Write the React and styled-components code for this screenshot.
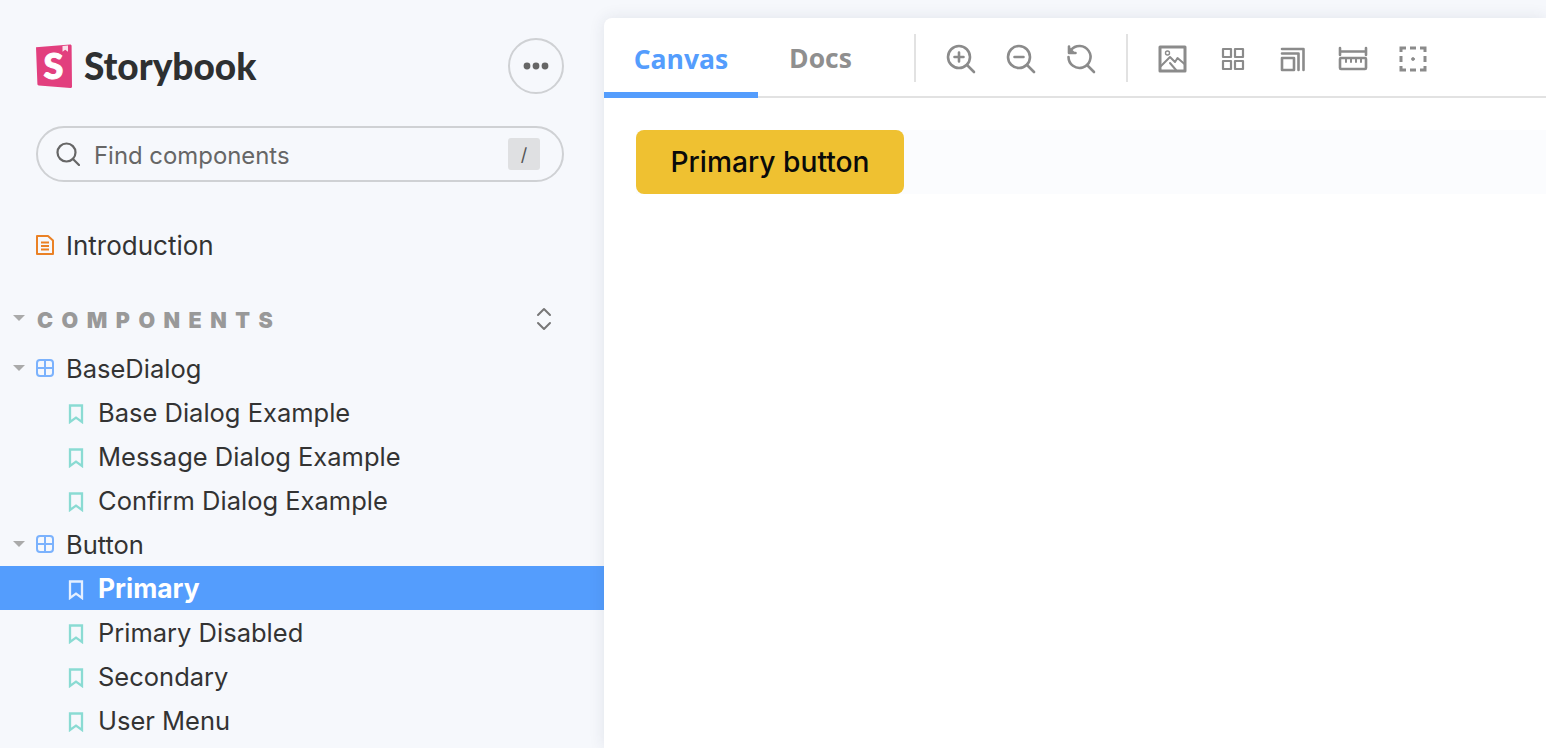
import React from "react";
import styled, { createGlobalStyle } from "styled-components";

const Global = createGlobalStyle`
  html, body { margin: 0; padding: 0; height: 100%; overflow: hidden; background: #f6f8fc; }
  #root { height: 100%; }
  * { box-sizing: border-box; }
`;

const Page = styled.div`
  display: flex;
  width: 1546px;
  height: 748px;
  overflow: hidden;
  background: #f6f8fc;
  font-family: Inter, "Liberation Sans", sans-serif;
  color: #333;
`;

const Sidebar = styled.aside`
  width: 604px;
  flex: none;
  padding-top: 38px;
  display: flex;
  flex-direction: column;
`;

const Brand = styled.div`
  display: flex;
  align-items: center;
  justify-content: space-between;
  padding: 0 40px 0 36px;
`;

const Logo = styled.div`
  display: flex;
  align-items: center;
  gap: 12px;
`;

const LogoName = styled.span`
  font-family: Lato, sans-serif;
  font-weight: 900;
  font-size: 37px;
  line-height: 44px;
  color: #2e3031;
`;

const MenuButton = styled.button`
  width: 56px;
  height: 56px;
  border-radius: 50%;
  border: 2px solid #cfd1d4;
  background: transparent;
  padding: 0;
  display: flex;
  align-items: center;
  justify-content: center;
`;

const Search = styled.div`
  margin: 32px 40px 0 36px;
  height: 56px;
  border-radius: 28px;
  border: 2px solid #cfd1d4;
  display: flex;
  align-items: center;
  padding: 0 22px 0 18px;
  gap: 14px;
`;

const SearchText = styled.span`
  flex: 1;
  font-size: 23.9px;
  color: #666;
  padding-top: 3px;
`;

const Kbd = styled.span`
  width: 32px;
  height: 32px;
  border-radius: 3px;
  background: #dfe0e2;
  color: #555;
  font-size: 18px;
  display: flex;
  align-items: center;
  justify-content: center;
`;

const Row = styled.div`
  height: 44px;
  display: flex;
  align-items: center;
  flex: none;
  font-size: ${(p) => (p.$active ? 26.4 : 25.5)}px;
  padding-left: ${(p) => (p.$depth === 1 ? 68 : 13)}px;
  background: ${(p) => (p.$active ? "#549dfd" : "transparent")};
  color: ${(p) => (p.$active ? "#fff" : "#333")};
  font-weight: ${(p) => (p.$active ? 700 : 400)};
`;

const IntroRow = styled(Row)`
  margin-top: 41px;
  padding-left: 36px;
  font-size: 26px;
`;

const SectionHeader = styled.div`
  margin-top: 31px;
  margin-bottom: 4px;
  height: 44px;
  flex: none;
  display: flex;
  align-items: center;
  padding: 0 52px 0 13px;
`;

const SectionLabel = styled.span`
  flex: 1;
  margin-left: 12px;
  font-family: Inter, sans-serif;
  font-weight: 900;
  font-size: 21.5px;
  letter-spacing: 8.5px;
  color: #999;
`;

const Caret = styled.span`
  width: 0;
  height: 0;
  flex: none;
  margin-right: 11px;
  border-left: 6px solid transparent;
  border-right: 6px solid transparent;
  border-top: 6px solid #aaa;
`;

const SectionCaret = styled(Caret)`
  margin-right: 0;
  margin-top: -4px;
`;

const ExpandIcon = styled.svg`
  display: block;
  margin-top: -3px;
`;

const RowIcon = styled.svg`
  flex: none;
  width: 18px;
  height: 20px;
  margin-right: 12px;
  display: block;
`;

const LeafIcon = styled.svg`
  flex: none;
  width: 16px;
  height: 20px;
  margin-right: 14px;
  margin-top: 3px;
  display: block;
`;

const Main = styled.main`
  flex: 1;
  margin-top: 18px;
  background: #fff;
  border-top-left-radius: 8px;
  box-shadow: 0 0 16px rgba(40, 50, 80, 0.1);
  display: flex;
  flex-direction: column;
  min-width: 0;
`;

const Toolbar = styled.div`
  height: 80px;
  flex: none;
  display: flex;
  align-items: center;
  border-bottom: 2px solid #e2e2e2;
`;

const Tab = styled.div`
  height: 80px;
  width: ${(p) => p.$w}px;
  flex: none;
  display: flex;
  align-items: center;
  justify-content: center;
  padding-top: 8px;
  font-family: "Open Sans", sans-serif;
  font-weight: 700;
  font-size: 26.5px;
  color: ${(p) => (p.$active ? "#549dfd" : "#8f8f8f")};
  border-bottom: 6px solid ${(p) => (p.$active ? "#549dfd" : "transparent")};
  margin-bottom: ${(p) => (p.$active ? "-2px" : "0")};
`;

const Divider = styled.div`
  width: 2px;
  height: 48px;
  flex: none;
  margin: 2px 15px 0;
  background: #e2e2e2;
`;

const FirstDivider = styled(Divider)`
  margin-left: 31px;
`;

const Tool = styled.div`
  width: 60px;
  height: 60px;
  flex: none;
  margin-top: 4px;
  display: flex;
  align-items: center;
  justify-content: center;
`;

const ToolSvg = styled.svg`
  width: 30px;
  height: 30px;
  display: block;
  fill: none;
  stroke: #8b8b8b;
  stroke-width: 2.6;
  stroke-linecap: round;
  stroke-linejoin: round;
`;

const Stage = styled.div`
  padding: 32px 0 0 32px;
`;

const Strip = styled.div`
  height: 64px;
  background: #fbfcfe;
`;

const PrimaryButton = styled.button`
  width: 268px;
  height: 64px;
  border: 0;
  border-radius: 8px;
  background: #efc131;
  color: #0a0a0a;
  font-family: Inter, sans-serif;
  font-size: 28.2px;
  font-weight: 500;
  padding: 0;
`;

const StorybookMark = () => (
  <svg width="36" height="44" viewBox="0 0 36 44">
    <path d="M0 3.2 34 .6 C35 .6 35.6 1.2 35.6 2 L36 42.4 C36 43.4 35.2 44 34.4 44 L2.8 41.4 C2 41.3 1.4 40.8 1.4 40 Z" fill="#e23f7e" />
    <path d="M26.5 2 L32 1.6 L32 7.8 L29.2 5.8 L26.5 7.8 Z" fill="#f9e0ea" />
    <text x="17.5" y="34.5" textAnchor="middle" fontFamily="Lato, sans-serif" fontWeight="900" fontSize="36" fill="#fff" stroke="#fff" strokeWidth="1">S</text>
  </svg>
);

const DocIcon = () => (
  <RowIcon viewBox="0 0 18 20" fill="none" stroke="#ea8125" strokeWidth="2">
    <path d="M1 1h11l5 4.5V19H1Z" strokeLinejoin="round" />
    <path d="M5 7.5h8M5 11h8M5 14.5h8" />
  </RowIcon>
);

const GridIcon = () => (
  <RowIcon viewBox="0 0 18 20" fill="none" stroke="#7bb2fd" strokeWidth="2">
    <rect x="1" y="2" width="16" height="16" rx="3" />
    <path d="M9 2v16M1 10h16" />
  </RowIcon>
);

const LeafMark = ({ active }) => (
  <LeafIcon viewBox="0 0 16 20" fill="none" stroke={active ? "#e4efff" : "#8adbd3"} strokeWidth="2.3">
    <path d="M2 1.5h12v16.5L8 13.6 2 18Z" />
  </LeafIcon>
);

const Tree = ({ label }) => (
  <Row>
    <Caret />
    <GridIcon />
    {label}
  </Row>
);

const Leaf = ({ label, active }) => (
  <Row $depth={1} $active={active}>
    <LeafMark active={active} />
    {label}
  </Row>
);

const toolIcons = [
  <>
    <circle cx="13" cy="13" r="11" />
    <path d="M13 8.5v9M8.5 13h9M21 21 28 28" />
  </>,
  <>
    <circle cx="13" cy="13" r="11" />
    <path d="M8.5 13h9M21 21 28 28" />
  </>,
  <>
    <path d="M5 6A11 11 0 1 1 2.5 13" />
    <path d="M3 2.5v6.5h6.5" fill="#8b8b8b" />
    <path d="M21 21 28 28" />
  </>,
];

const viewIcons = [
  <>
    <rect x="2" y="3" width="25" height="24" strokeWidth="3" />
    <circle cx="9.5" cy="9" r="2" strokeWidth="1.4" />
    <path d="M3 22 12 13l5 5 2.5-4 7 6M12 19l6 7" strokeWidth="2" />
  </>,
  <>
    <rect x="5" y="5" width="8" height="8" strokeWidth="2.2" />
    <rect x="17" y="5" width="8" height="8" strokeWidth="2.2" />
    <rect x="5" y="17" width="8" height="8" strokeWidth="2.2" />
    <rect x="17" y="17" width="8" height="8" strokeWidth="2.2" />
  </>,
  <>
    <rect x="4" y="14" width="12" height="12" />
    <path d="M4 9.500h16.500V26M4 5h21.500v21" />
  </>,
  <>
    <path d="M2 4v7M28 4v7M2 7.5h26" />
    <rect x="2" y="14" width="26" height="11" rx="1" />
    <path d="M8 14v4M13 14v4M18 14v4M23 14v4" strokeWidth="2" />
  </>,
  <>
    <path d="M3 8V4h5M12 4h6M22 4h5v4M27 12v6M27 22v4h-5M18 26h-6M8 26H3v-4M3 18v-6" strokeLinecap="butt" strokeLinejoin="miter" strokeWidth="3" />
    <circle cx="15" cy="15" r="1.5" fill="#8b8b8b" strokeWidth="0.8" />
  </>,
];

export default function App() {
  return (
    <Page>
      <Global />
      <Sidebar>
        <Brand>
          <Logo>
            <StorybookMark />
            <LogoName>Storybook</LogoName>
          </Logo>
          <MenuButton aria-label="Menu">
            <svg width="26" height="8" viewBox="0 0 26 8" fill="#666">
              <circle cx="4" cy="4" r="3.4" />
              <circle cx="13" cy="4" r="3.4" />
              <circle cx="22" cy="4" r="3.4" />
            </svg>
          </MenuButton>
        </Brand>
        <Search>
          <svg width="24" height="24" viewBox="0 0 24 24" fill="none" stroke="#666" strokeWidth="2.2" strokeLinecap="round">
            <circle cx="10.5" cy="10.5" r="9" />
            <path d="M17 17l6 6" />
          </svg>
          <SearchText>Find components</SearchText>
          <Kbd>/</Kbd>
        </Search>
        <IntroRow>
          <DocIcon />
          Introduction
        </IntroRow>
        <SectionHeader>
          <SectionCaret />
          <SectionLabel>COMPONENTS</SectionLabel>
          <ExpandIcon width="16" height="24" viewBox="0 0 16 24" fill="none" stroke="#777" strokeWidth="2" strokeLinecap="round" strokeLinejoin="round">
            <path d="M2 8l6-6 6 6M2 16l6 6 6-6" />
          </ExpandIcon>
        </SectionHeader>
        <Tree label="BaseDialog" />
        <Leaf label="Base Dialog Example" />
        <Leaf label="Message Dialog Example" />
        <Leaf label="Confirm Dialog Example" />
        <Tree label="Button" />
        <Leaf label="Primary" active />
        <Leaf label="Primary Disabled" />
        <Leaf label="Secondary" />
        <Leaf label="User Menu" />
      </Sidebar>
      <Main>
        <Toolbar>
          <Tab $active $w={154}>Canvas</Tab>
          <Tab $w={125}>Docs</Tab>
          <FirstDivider />
          {toolIcons.map((icon, i) => (
            <Tool key={i}>
              <ToolSvg viewBox="0 0 30 30">{icon}</ToolSvg>
            </Tool>
          ))}
          <Divider />
          {viewIcons.map((icon, i) => (
            <Tool key={i}>
              <ToolSvg viewBox="0 0 30 30">{icon}</ToolSvg>
            </Tool>
          ))}
        </Toolbar>
        <Stage>
          <Strip>
            <PrimaryButton>Primary button</PrimaryButton>
          </Strip>
        </Stage>
      </Main>
    </Page>
  );
}
